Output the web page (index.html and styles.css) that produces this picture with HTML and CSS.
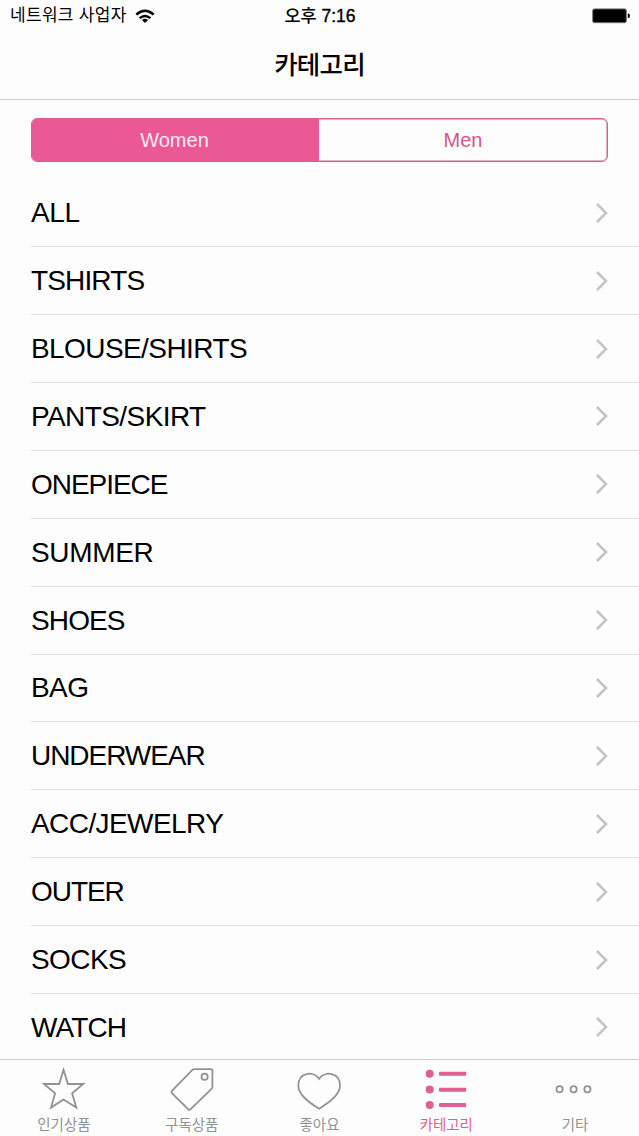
FILE: index.html
```html
<!DOCTYPE html>
<html lang="ko">
<head>
<meta charset="utf-8">
<title>카테고리</title>
<link rel="stylesheet" href="styles.css">
</head>
<body>
<div class="screen">
  <header class="header">
    <div class="status">
      <div class="carrier"><span>네트워크 사업자</span>
        <svg class="wifi" width="20" height="15" viewBox="0 0 20 15" fill="none" stroke="#000" stroke-width="2.4"><path d="M1.3 5.7Q10-2 18.7 5.7M4.6 9.2Q10 4.7 15.4 9.2"/><path d="M6.9 11Q10 8.6 13.1 11L10 14Z" fill="#000" stroke="none"/></svg>
      </div>
      <div class="clock">오후 <b>7:16</b></div>
      <svg class="battery" width="38" height="16" viewBox="0 0 38 16"><rect x=".7" y=".9" width="33.6" height="13.8" rx="1.6" fill="#000" stroke="#777" stroke-width="1"/><path d="M35.8 5.3Q38 5.7 38 7.8T35.8 10.3Z"/></svg>
    </div>
    <h1 class="title">카테고리</h1>
  </header>
  <main class="content">
    <div class="segments"><button class="segment active">Women</button><button class="segment">Men</button></div>
    <ul class="list">
      <li class="row"><span class="name loose">ALL</span><svg class="chevron" viewBox="0 0 14 22"><path d="M2 2L11 11L2 20"/></svg></li>
      <li class="row"><span class="name tight">TSHIRTS</span><svg class="chevron" viewBox="0 0 14 22"><path d="M2 2L11 11L2 20"/></svg></li>
      <li class="row"><span class="name">BLOUSE/SHIRTS</span><svg class="chevron" viewBox="0 0 14 22"><path d="M2 2L11 11L2 20"/></svg></li>
      <li class="row"><span class="name">PANTS/SKIRT</span><svg class="chevron" viewBox="0 0 14 22"><path d="M2 2L11 11L2 20"/></svg></li>
      <li class="row"><span class="name tighter">ONEPIECE</span><svg class="chevron" viewBox="0 0 14 22"><path d="M2 2L11 11L2 20"/></svg></li>
      <li class="row"><span class="name loose">SUMMER</span><svg class="chevron" viewBox="0 0 14 22"><path d="M2 2L11 11L2 20"/></svg></li>
      <li class="row"><span class="name tight">SHOES</span><svg class="chevron" viewBox="0 0 14 22"><path d="M2 2L11 11L2 20"/></svg></li>
      <li class="row"><span class="name">BAG</span><svg class="chevron" viewBox="0 0 14 22"><path d="M2 2L11 11L2 20"/></svg></li>
      <li class="row"><span class="name tighter">UNDERWEAR</span><svg class="chevron" viewBox="0 0 14 22"><path d="M2 2L11 11L2 20"/></svg></li>
      <li class="row"><span class="name">ACC/JEWELRY</span><svg class="chevron" viewBox="0 0 14 22"><path d="M2 2L11 11L2 20"/></svg></li>
      <li class="row"><span class="name tighter">OUTER</span><svg class="chevron" viewBox="0 0 14 22"><path d="M2 2L11 11L2 20"/></svg></li>
      <li class="row"><span class="name">SOCKS</span><svg class="chevron" viewBox="0 0 14 22"><path d="M2 2L11 11L2 20"/></svg></li>
      <li class="row"><span class="name tight">WATCH</span><svg class="chevron" viewBox="0 0 14 22"><path d="M2 2L11 11L2 20"/></svg></li>
    </ul>
  </main>
  <nav class="tabs">
    <a class="tab"><svg class="icon" viewBox="0 0 48 46"><path d="M23.5 3.8L27.9 18H43.2L32.1 27.2L36.3 41.6L23.5 33.6L11 41.6L15.1 27.2L4 18H19.2Z"/></svg><span>인기상품</span></a>
    <a class="tab"><svg class="icon" viewBox="0 0 48 46"><path d="M26.5 3.2H42.8Q44.4 3.2 44.4 4.8V20.7Q44.4 22 43.3 23.1L22.7 43.2Q21.4 44.5 20.1 43.2L4.1 27.3Q2.9 26 4.1 24.7L24.2 4.2Q25.2 3.2 26.5 3.2Z"/><circle cx="36.6" cy="10.7" r="3.1"/></svg><span>구독상품</span></a>
    <a class="tab"><svg class="icon" viewBox="0 0 48 46"><path d="M24.1 12.8C18.5 4.5 3.3 6.2 3.3 19.5C3.3 30 17.5 38.5 24.1 42.8C30.7 38.5 45 30 45 19.5C45 6.2 29.7 4.5 24.1 12.8Z"/></svg><span>좋아요</span></a>
    <a class="tab active"><svg class="icon solid" viewBox="0 0 48 46"><circle cx="6.7" cy="7.7" r="4"/><circle cx="6.7" cy="23.4" r="4"/><circle cx="6.7" cy="39.1" r="4"/><rect x="16" y="5.7" width="27.2" height="4" rx=".8"/><rect x="16" y="21.7" width="27.2" height="4" rx=".8"/><rect x="16" y="37" width="27.2" height="4" rx=".8"/></svg><span>카테고리</span></a>
    <a class="tab"><svg class="icon" viewBox="0 0 48 46"><circle cx="8.6" cy="23.2" r="3.1"/><circle cx="22.6" cy="23.2" r="3.1"/><circle cx="36.4" cy="23.2" r="3.1"/></svg><span>기타</span></a>
  </nav>
</div>
</body>
</html>
```
FILE: styles.css
```css
* { box-sizing: border-box; }
body { margin: 0; background: #fdfdfd; color: #000; font-family: "Liberation Sans", "Noto Sans CJK KR", sans-serif; }
.screen { height: 1136px; display: flex; flex-direction: column; overflow: hidden; }
.header { height: 100px; flex: none; border-bottom: 1px solid #d0d0d2; }
.status { height: 32px; display: grid; grid-template-columns: 1fr auto 1fr; grid-template-rows: 32px; align-items: center; padding: 0 9px 0 10px; line-height: 32px; }
.carrier { display: flex; align-items: center; gap: 8px; font-size: 17px; letter-spacing: 0.3px; }
.clock { font-size: 17.5px; font-weight: 500; letter-spacing: 0; }
.clock b { font-weight: 500; -webkit-text-stroke: 0.4px #000; }
.battery { justify-self: end; }
.title { margin: 0; padding-top: 15px; text-align: center; font-size: 25.5px; line-height: 36px; font-weight: 500; letter-spacing: -0.8px; }
.content { flex: 1; min-height: 0; padding-top: 18px; overflow: hidden; }
.segments { display: flex; height: 44px; margin: 0 31px; border: 1px solid #dc5d90; border-radius: 6px; overflow: hidden; box-shadow: inset 0 0 0 0.5px #dc5d90; }
.segment { flex: 1 1 0; border: 0; padding: 0; background: transparent; color: #d4568a; font: 20px "Liberation Sans", sans-serif; }
.segment.active { flex: none; width: 287px; padding-right: 2px; background: #eb5995; color: #fdeaf3; }
.list { list-style: none; margin: 17.3px 0 0; padding: 0 0 0 31px; }
.row { height: 67.9px; display: flex; align-items: center; justify-content: space-between; padding-right: 30px; border-bottom: 1px solid #dfdfe1; }
.name { padding-top: 1px; font-size: 28px; line-height: 34px; letter-spacing: -0.58px; }
.name.loose { letter-spacing: -0.35px; }
.name.tight { letter-spacing: -0.87px; }
.name.tighter { letter-spacing: -1.05px; }
.chevron { width: 14px; height: 22px; fill: none; stroke: #c4c4c8; stroke-width: 2.6; }
.tabs { flex: none; height: 77px; display: flex; border-top: 1px solid #cfcfd2; background: #fdfdfd; }
.tab { flex: 1 1 0; display: flex; flex-direction: column; align-items: center; gap: 3px; padding-top: 6px; color: #929294; font-size: 14.5px; line-height: 20px; letter-spacing: -0.05px; }
.tab.active { color: #df5f93; }
.tab.active span { margin-right: 2px; }
.icon { flex: none; width: 48px; height: 46px; fill: none; stroke: currentColor; stroke-width: 1.8; }
.icon.solid { fill: currentColor; stroke: none; }
```
